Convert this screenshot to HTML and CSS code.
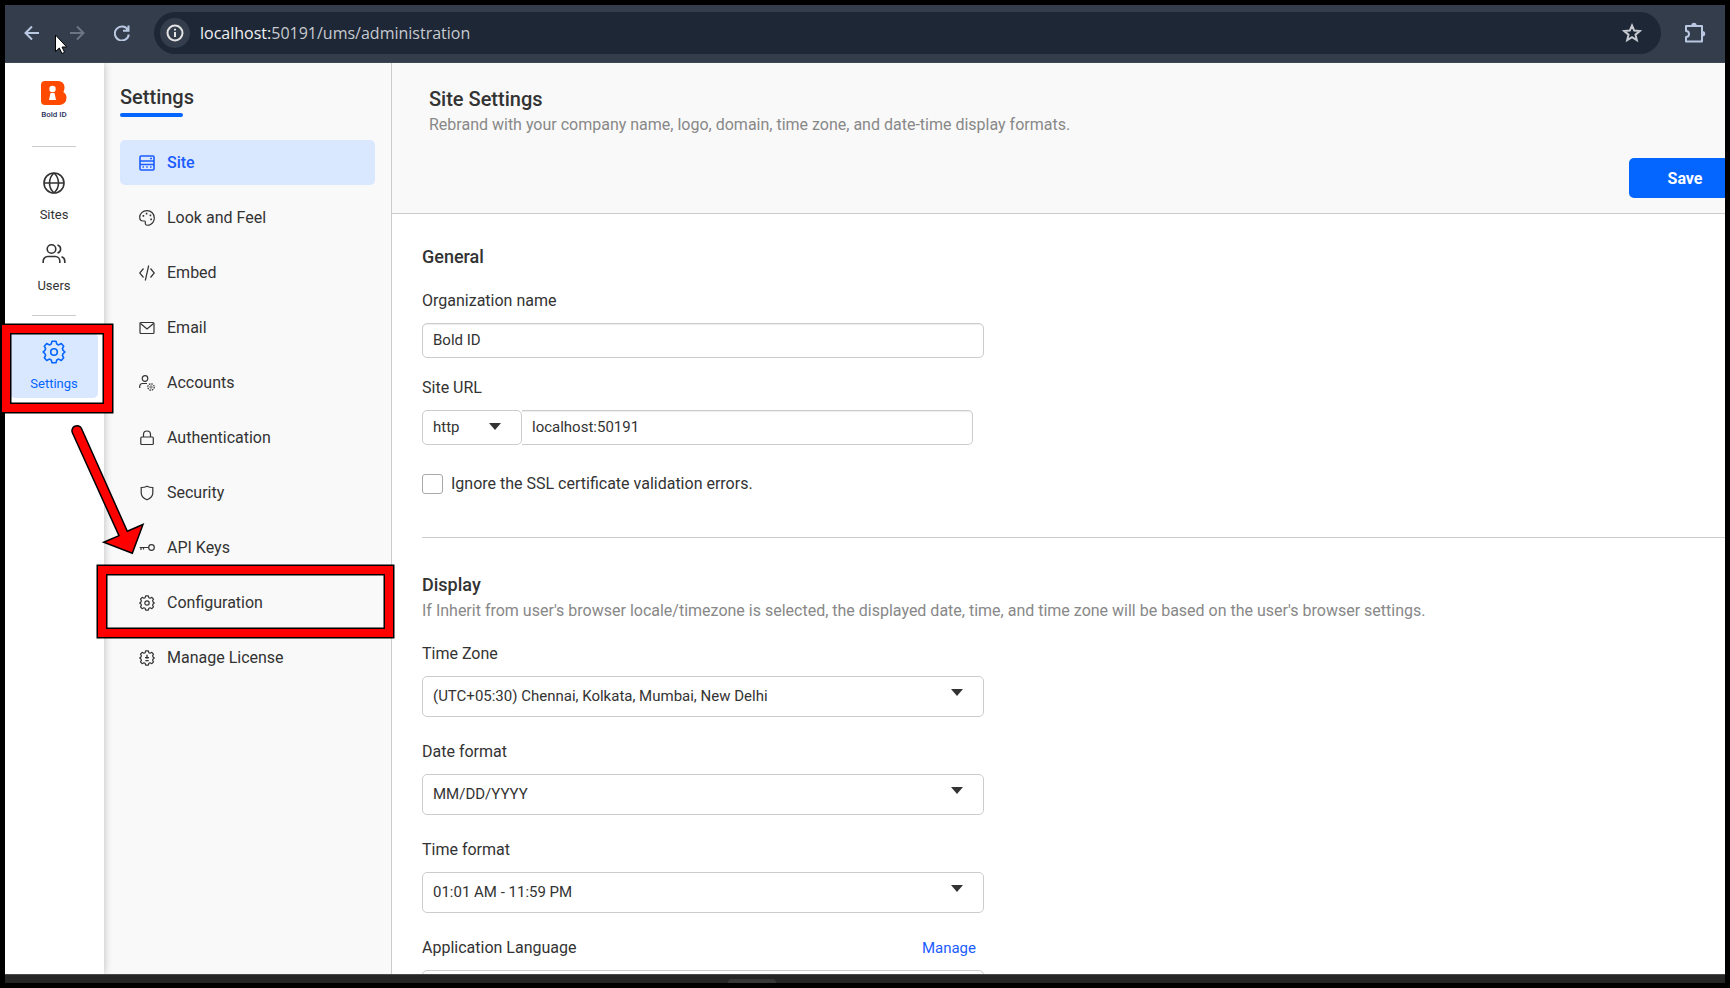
FILE: index.html
```html
<!DOCTYPE html>
<html lang="en">
<head>
<meta charset="utf-8">
<title>Site Settings - Bold ID</title>
<link rel="stylesheet" href="styles.css">
</head>
<body>
<div class="window">
  <header class="toolbar">
    <button class="tool" aria-label="Back"><svg width="16" height="16" viewBox="0 0 16 16"><path d="M15 8H2M8 1.5L1.5 8L8 14.5"/></svg></button>
    <button class="tool tool-off" aria-label="Forward"><svg width="16" height="16" viewBox="0 0 16 16"><path d="M1 8h13M8 1.5L14.500 8L8 14.500"/></svg></button>
    <button class="tool tool-reload" aria-label="Reload"><svg width="16" height="16" viewBox="0 0 16 16"><path d="M13.800 4.800A7 7 0 1 0 14.800 9.500M14.500 0.500V5.800H9"/></svg></button>
    <div class="omnibox">
      <span class="site-info"><svg width="18" height="18" viewBox="0 0 18 18"><circle cx="9" cy="9" r="7.500"/><path d="M9 8v5M9 4.800v1.800"/></svg></span>
      <span class="url"><span class="host">localhost:</span>50191/ums/administration</span>
      <button class="tool star" aria-label="Bookmark"><svg width="20" height="20" viewBox="0 0 20 20"><path d="M10 2.500l2.200 5.100 5.500.5-4.200 3.600 1.300 5.400L10 14.200l-4.800 2.900 1.300-5.400L2.300 8.100l5.500-.5z"/></svg></button>
    </div>
    <button class="tool" aria-label="Extensions"><svg width="22" height="22" viewBox="0 0 22 22"><path d="M2 4h16v15.500H2v-4.500a3 3 0 0 0 0-6z" stroke-linejoin="round"/><path class="solid" d="M7.300 3.500a2.700 2.700 0 0 1 5.400 0zM18.500 9a2.700 2.700 0 0 1 0 5.400z"/></svg></button>
  </header>

  <div class="app">
    <nav class="rail" aria-label="Main">
      <a class="brand" href="#">
        <svg width="26" height="24" viewBox="0 0 26 24"><path fill="#ff4a00" d="M4 0h13.500a6 6 0 0 1 6 6c0 2-.3 3.800-1.200 5A6.500 6.500 0 0 1 25.500 17a7 7 0 0 1-7 7H4a4 4 0 0 1-4-4V4a4 4 0 0 1 4-4z"/><circle cx="11.500" cy="8" r="3.200" fill="#fff"/><path fill="#fff" d="M9.500 12h4l1.500 7H8z"/></svg>
        <span>Bold ID</span>
      </a>
      <hr class="rail-line">
      <a class="rail-item" href="#"><svg width="24" height="24" viewBox="0 0 24 24"><circle cx="12" cy="12" r="10"/><path d="M2 12h20M12 2c6 5.500 6 14.500 0 20M12 2c-6 5.500-6 14.500 0 20"/></svg><span>Sites</span></a>
      <a class="rail-item" href="#"><svg width="24" height="24" viewBox="0 0 24 24"><circle cx="9.500" cy="7" r="4.300"/><path d="M1.200 21v-2a4.500 4.500 0 0 1 4.500-4.500h7.600a4.500 4.500 0 0 1 4.500 4.500v2M15.500 3a4.200 4.200 0 0 1 0 8.100M19.500 14.800a4.500 4.500 0 0 1 3.300 4.200v2"/></svg><span>Users</span></a>
      <hr class="rail-line">
      <a class="rail-item rail-current" href="#" aria-current="page"><svg width="24" height="24" viewBox="0 0 24 24"><use href="#gear"/></svg><span>Settings</span></a>
    </nav>

    <aside class="sidebar">
      <h2 class="sidebar-title">Settings</h2>
      <nav class="menu" aria-label="Settings">
        <a class="menu-item menu-current" href="#" aria-current="page"><svg width="16" height="16" viewBox="0 0 16 16"><rect x="1" y="1" width="14" height="14" rx="1"/><path d="M1 6h14M1 9.500h14"/><path d="M11 3.500h2M3.500 12h1.500M7.200 12h1.500M11 12h1.500" stroke-width="1.400"/></svg>Site</a>
        <a class="menu-item" href="#"><svg width="16" height="16" viewBox="0 0 16 16"><path d="M8 .7C3.700.7.7 3.600.7 7.300c0 2.400 1.500 3.700 3.300 3.700h1.500c1.500 0 .3 1.800 1 3.200.8 1.500 3.200 1.200 5 .2 2.400-1.300 3.800-3.700 3.800-6.400C15.300 3.800 12.200.7 8 .7z"/><path d="M3.600 5.800h1.600M6.800 3.600h1.600M10.600 5.300h1.600M11.300 9.300h1.600" stroke-width="1.700"/></svg>Look and Feel</a>
        <a class="menu-item" href="#"><svg width="16" height="16" viewBox="0 0 16 16"><path d="M4.500 3.500L.7 8l3.800 4.500M11.500 3.500L15.300 8l-3.800 4.500M9.700.500L6.300 15.500"/></svg>Embed</a>
        <a class="menu-item" href="#"><svg width="16" height="16" viewBox="0 0 16 16"><rect x="1" y="2.500" width="14" height="11" rx="1"/><path d="M1.500 3.500L8 9l6.500-5.500"/></svg>Email</a>
        <a class="menu-item" href="#"><svg width="16" height="16" viewBox="0 0 16 16"><circle cx="6" cy="3.500" r="2.800"/><path d="M.7 13v-1.500c0-2 1.300-3 3-3H8"/><circle cx="12" cy="12" r="3.200" stroke-dasharray="1.600 .9"/><circle cx="12" cy="12" r="1.200" stroke-width=".7"/></svg>Accounts</a>
        <a class="menu-item" href="#"><svg width="16" height="16" viewBox="0 0 16 16"><rect x="1.800" y="7" width="12.500" height="7.500" rx="1"/><path d="M4.500 7V4.500a3.500 3.500 0 0 1 7 0V7"/></svg>Authentication</a>
        <a class="menu-item" href="#"><svg width="16" height="16" viewBox="0 0 16 16"><path d="M8 1.200c1.800 1 3.700 1.300 5.800 1.300V8c0 3.200-2.300 5.300-5.800 6.800C4.500 13.300 2.200 11.200 2.200 8V2.500c2.100 0 4-.3 5.800-1.300z"/></svg>Security</a>
        <a class="menu-item" href="#"><svg width="16" height="16" viewBox="0 0 16 16"><circle cx="12.500" cy="7.500" r="2.800"/><path d="M9.700 7.500H.7M2 7.500v2.500M4.500 7.500v2"/></svg>API Keys</a>
        <a class="menu-item menu-gear" href="#"><svg width="16" height="16" viewBox="0 0 24 24"><use href="#gear"/></svg>Configuration</a>
        <a class="menu-item menu-gear" href="#"><svg width="16" height="16" viewBox="0 0 24 24"><use href="#gear-rim"/><path d="M12 7v6M9 11.500h6M9.500 16h5" stroke-width="2"/></svg>Manage License</a>
      </nav>
    </aside>

    <main class="main">
      <header class="page-head">
        <h1>Site Settings</h1>
        <p class="hint">Rebrand with your company name, logo, domain, time zone, and date-time display formats.</p>
        <button class="save" type="submit" form="site-form">Save</button>
      </header>

      <form class="form" id="site-form">
        <section class="section">
          <h2>General</h2>
          <div class="field">
            <label for="org">Organization name</label>
            <input class="control" id="org" type="text" value="Bold ID">
          </div>
          <div class="field">
            <label for="host">Site URL</label>
            <div class="url-row">
              <span class="picker picker-scheme">
                <select class="control" aria-label="Scheme"><option>http</option></select>
                <svg width="12" height="7" viewBox="0 0 12 7"><path d="M0 0h12L6 7z"/></svg>
              </span>
              <input class="control" id="host" type="text" value="localhost:50191">
            </div>
          </div>
          <div class="check">
            <input id="ssl" type="checkbox">
            <label for="ssl">Ignore the SSL certificate validation errors.</label>
          </div>
        </section>

        <section class="section section-display">
          <h2>Display</h2>
          <p class="hint">If Inherit from user's browser locale/timezone is selected, the displayed date, time, and time zone will be based on the user's browser settings.</p>
          <div class="field">
            <label for="tz">Time Zone</label>
            <span class="picker"><select class="control" id="tz"><option>(UTC+05:30) Chennai, Kolkata, Mumbai, New Delhi</option></select><svg width="12" height="7" viewBox="0 0 12 7"><path d="M0 0h12L6 7z"/></svg></span>
          </div>
          <div class="field">
            <label for="df">Date format</label>
            <span class="picker"><select class="control" id="df"><option>MM/DD/YYYY</option></select><svg width="12" height="7" viewBox="0 0 12 7"><path d="M0 0h12L6 7z"/></svg></span>
          </div>
          <div class="field">
            <label for="tf">Time format</label>
            <span class="picker"><select class="control" id="tf"><option>01:01 AM - 11:59 PM</option></select><svg width="12" height="7" viewBox="0 0 12 7"><path d="M0 0h12L6 7z"/></svg></span>
          </div>
          <div class="field">
            <div class="label-row"><label for="lang">Application Language</label><a href="#">Manage</a></div>
            <span class="picker"><select class="control" id="lang"><option>English</option></select><svg width="12" height="7" viewBox="0 0 12 7"><path d="M0 0h12L6 7z"/></svg></span>
          </div>
        </section>
      </form>
    </main>
  </div>
  <footer class="strip"><span class="strip-tab"></span></footer>
</div>

<svg class="marks" width="400" height="660" viewBox="0 0 400 660" aria-hidden="true">
  <g fill="none">
    <path stroke="#000" stroke-width="11" d="M6 329h102v79H6zM102 570h287v63H102z"/>
    <path stroke="#f00" stroke-width="8" d="M6 329h102v79H6zM102 570h287v63H102z"/>
  </g>
  <path fill="#f00" stroke="#000" stroke-width="1.500" d="M72.500 433A5 5 0 0 1 81.500 428.500L127.300 531.300L143 524.500L132.300 553.300L103.700 542.300L119 535.700z"/>
  <path fill="#fff" stroke="#000" d="M55.500 35v16.500l3.800-3.500 2.700 5.500 2.600-1.200-2.600-5.300h4.700z"/>
</svg>

<svg class="defs" width="0" height="0" aria-hidden="true">
  <defs>
    <path id="gear-rim" d="M10 1.300h4l.8 2.800 1.900.8 2.600-1.400 2.400 2.700-1.300 2.500.7 1.700 1.800 1.600v0l-1.800 1.600-.7 1.700 1.300 2.500-2.400 2.700-2.600-1.400-1.900.8-.8 2.800h-4l-.8-2.800-1.900-.8-2.600 1.400-2.400-2.700 1.300-2.500-.7-1.700L1.100 12l1.800-1.600.7-1.700-1.300-2.500 2.400-2.700 2.600 1.400 1.900-.8z" stroke-linejoin="round"/>
    <g id="gear"><use href="#gear-rim"/><circle cx="12" cy="12" r="3.300"/></g>
  </defs>
</svg>
</body>
</html>
```
FILE: styles.css
```css
* { box-sizing: border-box; }

body {
  margin: 0;
  height: 100vh;
  padding: 5px;
  overflow: hidden;
  background: #000;
  color: #333;
  font: 16px/20px Roboto, "Liberation Sans", sans-serif;
}

h1, h2, p { margin: 0; }
a { color: inherit; text-decoration: none; }
button { border: 0; padding: 0; font: inherit; }
svg { display: block; flex: none; }

.window { display: flex; flex-direction: column; height: 100%; }

/* Browser toolbar */
.toolbar {
  display: flex;
  align-items: center;
  gap: 29px;
  flex: none;
  height: 58px;
  padding: 0 19px 2px 19px;
  background: #333d4c;
  border-bottom: 1px solid #3f4956;
}
.tool { background: none; color: #b9c7e0; }
.tool svg { fill: none; stroke: currentColor; stroke-width: 2; }
.tool .solid { fill: currentColor; stroke: none; }
.tool-off { color: #6b7584; }
.omnibox {
  display: flex;
  align-items: center;
  flex: 1;
  height: 42px;
  margin: 0 -6px 0 -5px;
  padding: 0 19px 0 6px;
  border-radius: 21px;
  background: #1d2735;
}
.site-info {
  display: grid;
  place-items: center;
  width: 30px;
  height: 30px;
  border-radius: 50%;
  background: #333d4c;
}
.site-info svg { fill: none; stroke: #e3e3e3; stroke-width: 2; }
.url {
  flex: 1;
  margin-left: 10px;
  font: 16px/24px "Open Sans", "Noto Sans", sans-serif;
  color: #c7cad0;
}
.host { color: #f0f1f3; }
.star { color: #c7cad0; }

/* App shell */
.app { display: flex; flex: 1; min-height: 0; overflow: hidden; background: #fff; }

.rail {
  position: relative;
  display: flex;
  flex-direction: column;
  align-items: center;
  flex: none;
  width: 99px;
  padding: 18px 1px 0 0;
  background: #fff;
  box-shadow: 0 0 8px rgba(0, 0, 0, .25);
}
.brand {
  display: flex;
  flex-direction: column;
  align-items: center;
  gap: 3px;
  margin-bottom: 24px;
  color: #1f2f5c;
  font-size: 8px;
  font-weight: 500;
  line-height: 14px;
}
.rail-line { width: 44px; margin: 0; border: 0; border-top: 1px solid #ccc; }
.rail-item {
  display: flex;
  flex-direction: column;
  align-items: center;
  gap: 12px;
  width: 88px;
  margin-top: 24px;
  font-size: 13px;
  line-height: 16px;
}
.rail-item + .rail-item { margin-top: 19px; }
.rail-item svg { fill: none; stroke: currentColor; stroke-width: 1.6; }
.rail-line + .rail-current {
  margin-top: 17px;
  padding: 7px 0 6px;
  border-radius: 5px;
  background: #dae8ff;
  color: #0565ff;
}
.rail-item + .rail-line { margin-top: 21px; }

.sidebar {
  flex: none;
  width: 288px;
  padding: 20px 16px 0;
  background: #f9f9f9;
  border-right: 1px solid #ccc;
}
.sidebar-title { font-size: 20px; font-weight: 500; line-height: 28px; }
.sidebar-title::after {
  content: "";
  display: block;
  width: 63px;
  height: 4px;
  margin-top: 2px;
  border-radius: 2px;
  background: #0565ff;
}
.menu { display: flex; flex-direction: column; gap: 10px; margin-top: 23px; }
.menu-item {
  display: flex;
  align-items: center;
  gap: 12px;
  height: 45px;
  padding-left: 19px;
  border-radius: 5px;
}
.menu-item svg { fill: none; stroke: currentColor; stroke-width: 1.2; }
.menu-gear svg { stroke-width: 1.8; }
.menu-current { background: #dae8ff; color: #1a5cff; font-weight: 500; }
.menu-current svg { stroke-width: 1.6; }

/* Page */
.main { flex: 1; min-width: 0; overflow: hidden; }
.page-head {
  display: flex;
  flex-direction: column;
  height: 151px;
  padding: 22px 0 0 37px;
  background: #f9f9f9;
  border-bottom: 1px solid #ccc;
}
h1 { font-size: 20px; font-weight: 500; line-height: 28px; }
.hint { color: #888; white-space: nowrap; }
.page-head .hint { margin-top: 2px; }
.save {
  align-self: flex-end;
  width: 112px;
  height: 40px;
  margin: 23px -16px 0 0;
  padding-top: 1px;
  border-radius: 5px;
  background: #0565ff;
  color: #fff;
  font-weight: 700;
}
.form { padding-left: 30px; }
.section h2 { font-size: 18px; font-weight: 500; line-height: 24px; }
.section { padding: 31px 0 43px; border-bottom: 1px solid #ccc; }
.section-display { padding-top: 35px; }
.section-display .hint { margin-top: 4px; }

.field { display: flex; flex-direction: column; width: 562px; margin-top: 20px; }
.section h2 + .field { margin-top: 22px; }
.field label { line-height: 20px; }
.control {
  width: 100%;
  min-width: 0;
  height: 35px;
  margin-top: 12px;
  padding: 0 10px 2px;
  border: 1px solid #ccc;
  border-radius: 5px;
  background: #fff;
  color: #333;
  font: 15px/20px Roboto, "Liberation Sans", sans-serif;
}
input.control { box-shadow: inset 0 1px 1px rgba(0, 0, 0, .075); }
select.control { appearance: none; }
.url-row { display: flex; width: 551px; }
.url-row > .control { flex: 1; border-left: 0; border-radius: 0 5px 5px 0; }

.picker { display: grid; align-items: center; }
.picker > * { grid-area: 1 / 1; }
.picker > svg { justify-self: end; margin-right: 21px; margin-top: 4px; fill: #333; pointer-events: none; }
.picker-scheme { flex: none; width: 100px; }
.picker-scheme > svg { margin-top: 10px; }

.section-display .field { margin-top: 25px; }
.section-display .hint + .field { margin-top: 23px; }
.section-display .control { height: 41px; }

.check { display: flex; align-items: center; gap: 8px; margin-top: 29px; }
.check input {
  appearance: none;
  width: 21px;
  height: 20px;
  margin: 0;
  border: 1px solid #aaa;
  border-radius: 3px;
  background: #fff;
}
.label-row { display: flex; justify-content: space-between; padding-right: 8px; }
.label-row a { color: #1a5cff; font-size: 15px; }

.strip {
  display: flex;
  justify-content: center;
  align-items: flex-end;
  flex: none;
  height: 9px;
  padding-right: 226px;
  background: #262626;
  border-top: 1px solid #4a4a4a;
}
.strip-tab { width: 48px; height: 4px; border-radius: 4px 4px 0 0; background: #383838; }

/* Pointer and callouts drawn over the window */
.marks { position: absolute; top: 0; left: 0; pointer-events: none; }
.defs { position: absolute; }
```
